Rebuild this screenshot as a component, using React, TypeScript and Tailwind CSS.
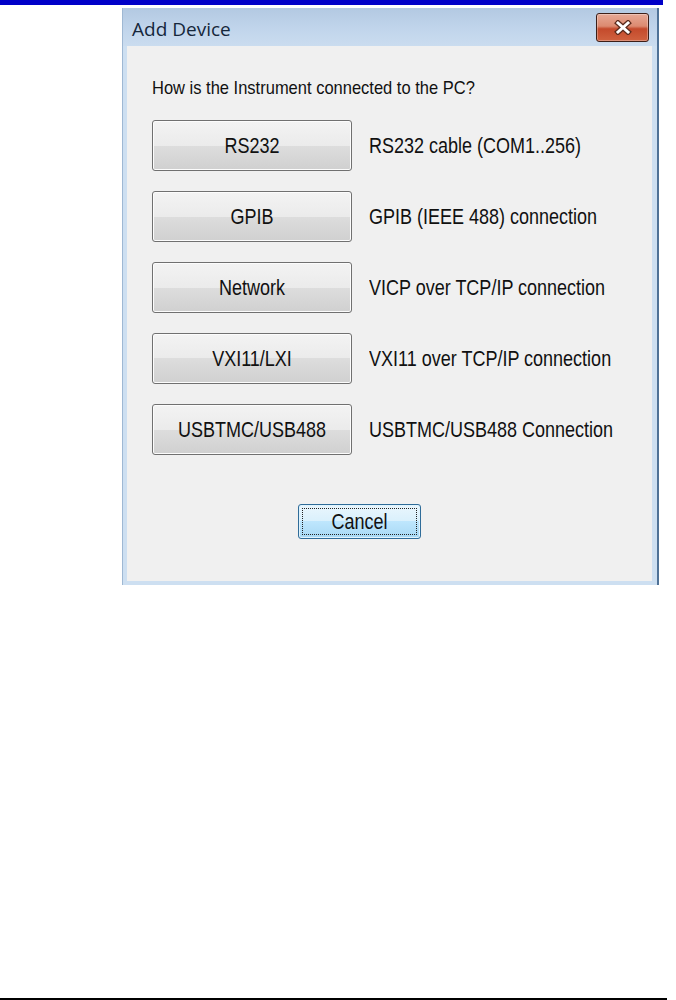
import React from 'react';

type Option = { label: string; desc: string };

const options: Option[] = [
  { label: 'RS232', desc: 'RS232 cable (COM1..256)' },
  { label: 'GPIB', desc: 'GPIB (IEEE 488) connection' },
  { label: 'Network', desc: 'VICP over TCP/IP connection' },
  { label: 'VXI11/LXI', desc: 'VXI11 over TCP/IP connection' },
  { label: 'USBTMC/USB488', desc: 'USBTMC/USB488 Connection' },
];

const CloseButton = () => (
  <div className="w-[53px] h-[29px] rounded-[3px] border border-[#3d1f18] bg-[linear-gradient(to_bottom,#e6a996_0%,#dc8a70_45%,#c44a2c_55%,#d0623f_100%)] flex items-center justify-center shadow-[inset_0_0_0_1px_rgba(255,255,255,0.3)]">
    <svg width="18" height="15" viewBox="0 0 18 15">
      <path d="M4 3 L14 12 M14 3 L4 12" stroke="#5b2a1c" strokeWidth="5.5" strokeLinecap="square" />
      <path d="M4 3 L14 12 M14 3 L4 12" stroke="#ffffff" strokeWidth="3" strokeLinecap="square" />
    </svg>
  </div>
);

export default function App() {
  return (
    <div className="w-[676px] h-[1000px] bg-white flex flex-col text-[#111] font-['Liberation_Sans',Arial,sans-serif]">
      {/* blue rule at the top of the page */}
      <div className="h-[5px] w-[663px] shrink-0 bg-[#0000c8]" />

      {/* Add Device dialog */}
      <div className="ml-[122px] mt-[3px] w-[537px] h-[577px] shrink-0 flex flex-col border-l border-r-2 border-l-[#9fb8d3] border-r-[#4f7297]">
        {/* title bar */}
        <div className="h-[38px] shrink-0 flex items-start justify-between bg-[linear-gradient(to_bottom,#b3c9e2_0%,#c2d6ec_60%,#cadcef_100%)]">
          <span className="pl-[9px] pt-[8px] leading-[26px] text-[19px] text-[#15273b] font-['Open_Sans','Noto_Sans',sans-serif]">
            Add Device
          </span>
          <div className="pt-[5px] pr-[8px]">
            <CloseButton />
          </div>
        </div>

        {/* client area */}
        <div className="flex-1 flex flex-col bg-[#f0f0f0] border-l-4 border-r-[5px] border-b-4 border-[#cddff1] pl-[25px] pt-[31px]">
          <p className="text-[16.5px] leading-[20px]">
            <span className="inline-block scale-y-[1.12]">How is the Instrument connected to the PC?</span>
          </p>

          <div className="mt-[23px] flex flex-col gap-[20px]">
            {options.map((o) => (
              <div key={o.label} className="flex items-center gap-[17px]">
                <button className="w-[200px] h-[51px] shrink-0 rounded-[3px] border border-[#707070] bg-[linear-gradient(to_bottom,#f3f3f3_0%,#ebebeb_50%,#dddddd_50%,#d0d0d0_100%)] shadow-[inset_0_0_0_1px_#fcfcfc] text-[18px] leading-[20px] text-[#111]">
                  <span className="inline-block scale-y-[1.18]">{o.label}</span>
                </button>
                <span className="inline-block text-[18px] leading-[20px] scale-y-[1.18]">{o.desc}</span>
              </div>
            ))}
          </div>

          <button className="mt-[49px] ml-[146px] w-[123px] h-[35px] p-[3px] rounded-[3px] border border-[#2f6c99] bg-[linear-gradient(to_bottom,#eaf6fd_0%,#d9f0fc_50%,#bee6fd_50%,#a7d9f5_100%)] shadow-[inset_0_0_0_1px_#dff2fc]">
            <div className="h-full border border-dotted border-[#222] flex items-center justify-center text-[18px] leading-[20px]">
              <span className="inline-block scale-y-[1.18]">Cancel</span>
            </div>
          </button>
        </div>
      </div>

      <div className="flex-1" />

      {/* black rule at the bottom of the page */}
      <div className="h-[2px] w-[667px] shrink-0 bg-black" />
    </div>
  );
}
